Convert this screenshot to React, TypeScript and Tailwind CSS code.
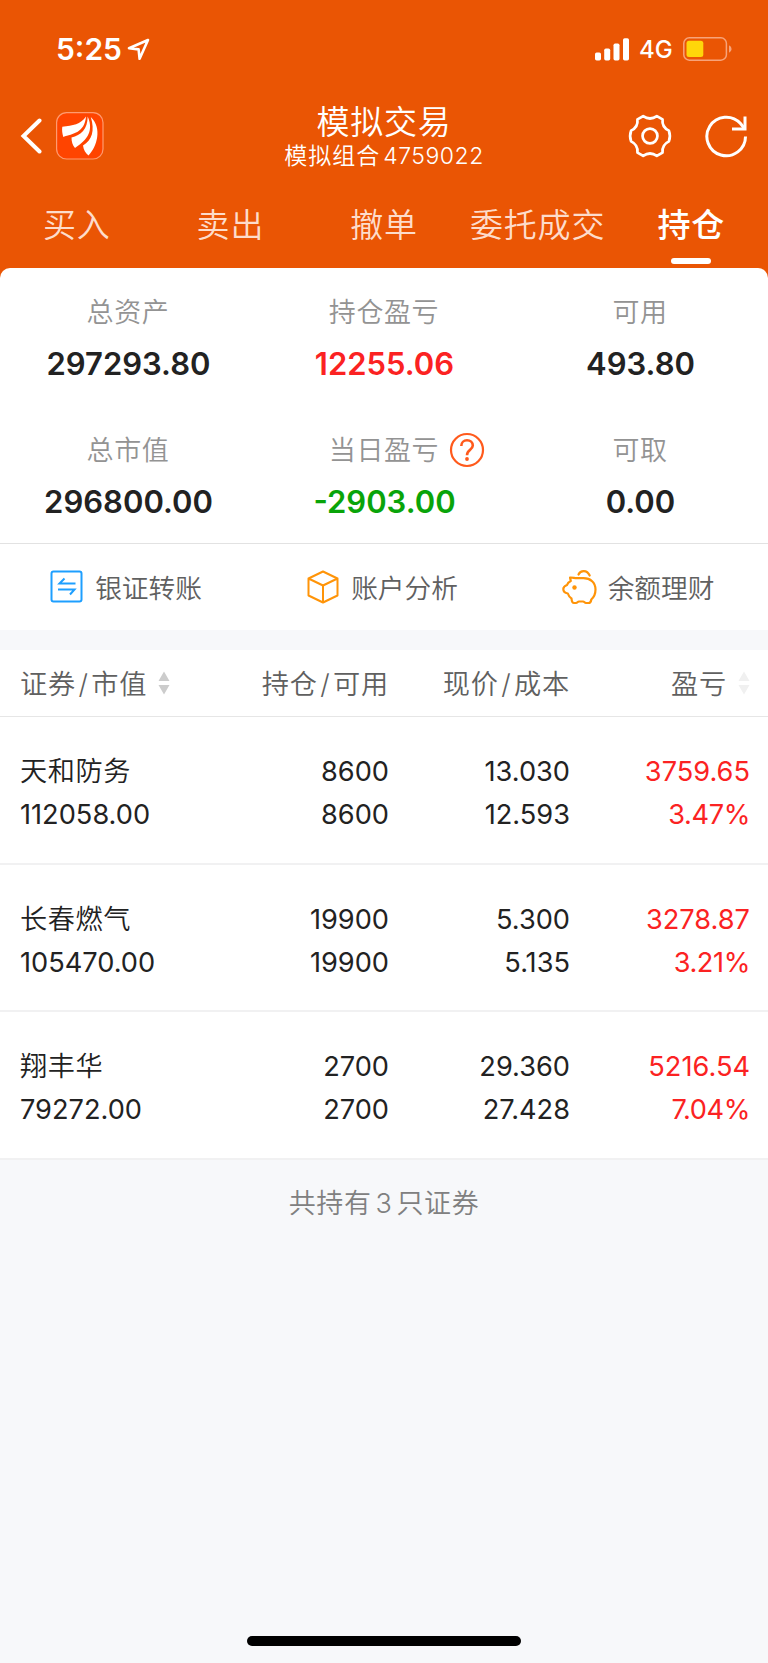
import type { ReactNode } from 'react';

type Tone = 'normal' | 'up' | 'down';

type Metric = {
  label: string;
  value: string;
  tone?: Tone;
  help?: boolean;
};

type Position = {
  name: string;
  marketValue: string;
  held: string;
  available: string;
  price: string;
  cost: string;
  profit: string;
  profitRate: string;
};

const tabs = ['买入', '卖出', '撤单', '委托成交', '持仓'];
const activeTab = '持仓';

const metrics: Metric[] = [
  { label: '总资产', value: '297293.80' },
  { label: '持仓盈亏', value: '12255.06', tone: 'up' },
  { label: '可用', value: '493.80' },
  { label: '总市值', value: '296800.00' },
  { label: '当日盈亏', value: '-2903.00', tone: 'down', help: true },
  { label: '可取', value: '0.00' },
];

const positions: Position[] = [
  {
    name: '天和防务',
    marketValue: '112058.00',
    held: '8600',
    available: '8600',
    price: '13.030',
    cost: '12.593',
    profit: '3759.65',
    profitRate: '3.47%',
  },
  {
    name: '长春燃气',
    marketValue: '105470.00',
    held: '19900',
    available: '19900',
    price: '5.300',
    cost: '5.135',
    profit: '3278.87',
    profitRate: '3.21%',
  },
  {
    name: '翔丰华',
    marketValue: '79272.00',
    held: '2700',
    available: '2700',
    price: '29.360',
    cost: '27.428',
    profit: '5216.54',
    profitRate: '7.04%',
  },
];

const toneClass: Record<Tone, string> = {
  normal: 'text-[#222]',
  up: 'text-[#fb2222]',
  down: 'text-[#09a409]',
};

function StatusBar() {
  return (
    <div className="flex h-[98px] items-center pl-[56px] pr-[36px] text-white">
      <span className="text-[30px] font-semibold leading-none">5:25</span>
      <svg className="ml-[5px]" width="23" height="23" viewBox="0 0 23 23" fill="none">
        <path
          d="M21 2 L2 10.2 L11.6 11.4 L12.6 20.8 Z"
          stroke="white"
          strokeWidth="2.6"
          strokeLinejoin="round"
        />
      </svg>
      <svg className="ml-auto" width="34" height="23" viewBox="0 0 34 23" fill="white">
        <rect x="0" y="14.5" width="6" height="8" rx="1.7" />
        <rect x="9.2" y="10.5" width="6" height="12" rx="1.7" />
        <rect x="18.5" y="5.5" width="6" height="17" rx="1.7" />
        <rect x="28" y="0.3" width="6" height="22.2" rx="1.7" />
      </svg>
      <span className="ml-[10px] w-[34px] pt-[2px] text-[24px] font-medium leading-none">4G</span>
      <svg className="ml-[10px]" width="49" height="24" viewBox="0 0 49 24" fill="none">
        <rect x="0.8" y="0.8" width="42.6" height="22.4" rx="5.5" stroke="#f7a37a" strokeWidth="1.5" />
        <rect x="3.5" y="3.8" width="16.8" height="16.2" rx="2.5" fill="#ffd60a" />
        <path d="M46 8.2 Q48.6 9.5 48.6 12 Q48.6 14.5 46 15.8 Z" fill="#f7a37a" />
      </svg>
    </div>
  );
}

function NavBar() {
  return (
    <div className="relative flex h-[92px] items-start justify-between pl-[20px] pr-[20px]">
      <div className="flex items-center pt-[14px]">
        <svg width="23" height="36" viewBox="0 0 23 36" fill="none">
          <path d="M19.5 2.5 L3.5 18 L19.5 33.5" stroke="white" strokeWidth="4" strokeLinecap="round" />
        </svg>
        <svg className="ml-[13px]" width="48" height="48" viewBox="0 0 48 48">
          <rect x="0.6" y="0.6" width="46.4" height="46.4" rx="10" fill="#ff4400" stroke="#ff9a70" strokeWidth="1.2" />
          <g fill="white">
            <path d="M30 4.5 C24.5 12.5 17 13.5 6.3 14.8 C5.8 18 6.2 21.5 7.3 25 C17 21.5 28.5 21 30 4.5 Z" />
            <path d="M31.7 4.5 C31.5 17.5 25 23 15.5 25.5 C15.5 29.5 16.5 33 19 36 C28 30 39 21 31.7 4.5 Z" />
            <path d="M34.8 5 C39 19 36 28 27 33.5 C27.5 38 29.5 41 32.5 43.5 C41 35 46.5 16 34.8 5 Z" />
          </g>
        </svg>
      </div>
      <div className="absolute inset-x-0 top-[3px] flex flex-col items-center text-white">
        <span className="text-[33px] font-[350] leading-[42px] tracking-[0.8px]">模拟交易</span>
        <span className="flex gap-[3px] text-[23px] leading-[26px]">
          <span className="font-[350] tracking-[1px]">模拟组合</span>
          <span className="font-[350] tracking-[0.5px]">4759022</span>
        </span>
      </div>
      <div className="flex items-center pt-[15px]">
        <svg width="46" height="46" viewBox="-0.5 -0.5 47 47" fill="none" stroke="white" strokeWidth="2.8">
          <path
            strokeLinejoin="round"
            d="M16 2.7 Q23 7.5 30 2.7 L35.8 6 Q35 14 42.3 17.5 Q44.3 23 42.3 28.5 Q35 32 35.8 40 L30 43.3 Q23 38.5 16 43.3 L10.2 40 Q11 32 3.7 28.5 Q1.7 23 3.7 17.5 Q11 14 10.2 6 Z"
          />
          <circle cx="23" cy="23" r="7.6" />
        </svg>
        <svg className="ml-[31px]" width="44" height="44" viewBox="0 0 44 44" fill="none" stroke="white" strokeWidth="3">
          <path d="M41.5 22.5 A19.3 19.3 0 1 1 36.5 9.5 L40.5 14.5" />
          <path d="M41 2.5 V15 H28" />
        </svg>
      </div>
    </div>
  );
}

function TabBar() {
  return (
    <div className="grid h-[78px] grid-cols-5">
      {tabs.map((tab) => (
        <div key={tab} className="relative flex justify-center pt-[11px]">
          <span
            className={
              tab === activeTab
                ? 'text-[33px] font-medium leading-[48px] tracking-[0.8px] text-white'
                : 'text-[33px] font-[350] leading-[48px] tracking-[0.8px] text-[#fddccb]'
            }
          >
            {tab}
          </span>
          {tab === activeTab ? (
            <span className="absolute bottom-[4px] left-1/2 h-[6px] w-[40px] -translate-x-1/2 rounded-full bg-white" />
          ) : null}
        </div>
      ))}
    </div>
  );
}

function HelpIcon() {
  return (
    <svg className="absolute -right-[46px] top-px" width="36" height="36" viewBox="0 0 36 36" fill="none">
      <circle cx="18" cy="18" r="16" stroke="#ff5a1c" strokeWidth="2.2" />
      <path
        d="M12.3 14 C12.3 10.5 14.8 8.3 18 8.3 C21.3 8.3 23.8 10.5 23.8 13.6 C23.8 17.8 18 18 18 23.2"
        stroke="#ff5a1c"
        strokeWidth="2.6"
      />
      <circle cx="18" cy="27" r="1.9" fill="#ff5a1c" />
    </svg>
  );
}

function Summary() {
  return (
    <div className="grid h-[276px] grid-cols-3 grid-rows-[138px_138px] border-b border-[#e2e2e2]">
      {metrics.map(({ label, value, tone = 'normal', help }) => (
        <div key={label} className="flex flex-col items-center pt-[25px]">
          <span className="relative text-[27px] font-[350] leading-[40px] tracking-[0.6px] text-[#939393]">
            {label}
            {help ? <HelpIcon /> : null}
          </span>
          <span className={`mt-[11px] pl-px text-[31px] font-semibold leading-[40px] ${toneClass[tone]}`}>
            {value}
          </span>
        </div>
      ))}
    </div>
  );
}

function Shortcut({ icon, label }: { icon: ReactNode; label: string }) {
  return (
    <div className="flex items-center justify-center pr-[4px]">
      {icon}
      <span className="ml-[11px] pt-px text-[26.7px] font-[350] leading-[40px] text-[#606060]">{label}</span>
    </div>
  );
}

function Shortcuts() {
  return (
    <div className="grid h-[86px] grid-cols-3">
      <Shortcut
        label="银证转账"
        icon={
          <svg width="34" height="34" viewBox="0 0 34 34" fill="none" stroke="#1e9fff" strokeWidth="2">
            <rect x="1.5" y="1.5" width="30" height="30" rx="2" />
            <path d="M25.5 13.5 H9.5 L14.5 8.5 M8 19.5 H24.5 L20 24.5" />
          </svg>
        }
      />
      <Shortcut
        label="账户分析"
        icon={
          <svg width="34" height="34" viewBox="0 0 34 34" fill="none" stroke="#ff9408" strokeWidth="2" strokeLinejoin="round">
            <path d="M17 1.5 L31.5 8.5 V25.5 L17 32.5 L2.5 25.5 V8.5 Z M2.5 8.5 L17 15.5 L31.5 8.5 M17 15.5 V32.5" />
          </svg>
        }
      />
      <Shortcut
        label="余额理财"
        icon={
          <svg width="35" height="36" viewBox="0 0 35 36" fill="none" stroke="#ff9408" strokeWidth="2.2" strokeLinejoin="round" strokeLinecap="round">
            <path d="M8 8.5 C10.5 8.3 12.5 9.2 14.5 9.2 H21.5 C28.500 9.2 33.5 13.5 33.5 20.5 C33.5 25.5 31.500 28.5 29.3 30.5 C29 33 28 34 26.500 34 H24 C22.500 34 22.500 32.5 21 32.5 H17 C15.500 32.5 15.500 34 14 34 H12 C10 34 9.700 32 9.500 29.5 C7.500 28.5 6.500 26.5 5.8 24.5 C3 24 1.3 22.5 1.3 20 C1.3 17.5 3 16.8 5 16 C5.500 14 7 12.8 8.8 12 Z" />
            <path d="M16.5 5.5 C18.500 1 25 0.5 27.700 6.5" />
            <circle cx="12.5" cy="18.5" r="2.2" fill="#ff9408" stroke="none" />
          </svg>
        }
      />
    </div>
  );
}

function SortArrows({ className }: { className: string }) {
  return (
    <svg className={className} width="12" height="24" viewBox="0 0 12 24" fill="currentColor">
      <path d="M6 0.5 L11.5 10 H0.5 Z M0.5 14 H11.5 L6 23.5 Z" />
    </svg>
  );
}

function Slash() {
  return <span className="px-[2.5px]">/</span>;
}

function TableHead() {
  return (
    <div className="grid h-[67px] grid-cols-[209px_180px_181px_180px] items-center border-b border-[#e6e6e6] pt-[3px] text-[27.2px] font-[350] leading-[40px] tracking-[0.8px] text-[#606060]">
      <div className="flex items-center pl-[20px]">
        证券<Slash />市值
        <SortArrows className="-mt-[3px] ml-[11px] text-[#ccc]" />
      </div>
      <div className="text-right">
        持仓<Slash />可用
      </div>
      <div className="text-right">
        现价<Slash />成本
      </div>
      <div className="flex items-center justify-end">
        盈亏
        <SortArrows className="-mt-[3px] ml-[11px] text-[#f0f0f0]" />
      </div>
    </div>
  );
}

function Cell({ top, bottom }: { top: string; bottom: string }) {
  return (
    <div className="flex flex-col text-right">
      <span>{top}</span>
      <span>{bottom}</span>
    </div>
  );
}

function PositionRow({ position }: { position: Position }) {
  return (
    <div className="grid h-[147.5px] grid-cols-[209px_180px_181px_180px] border-b-2 border-[#f1f1f2] pt-[33px] text-[27.2px] leading-[43.3px] text-[#222]">
      <div className="flex flex-col pl-[20px]">
        <span className="font-[350] tracking-[0.6px]">{position.name}</span>
        <span>{position.marketValue}</span>
      </div>
      <Cell top={position.held} bottom={position.available} />
      <Cell top={position.price} bottom={position.cost} />
      <div className="flex flex-col text-right text-[#fb2222]">
        <span>{position.profit}</span>
        <span className="tracking-[-0.4px]">{position.profitRate}</span>
      </div>
    </div>
  );
}

export default function App() {
  return (
    <div className="flex h-[1663px] w-[768px] flex-col overflow-hidden bg-[#f7f8fa] font-[Inter,'Noto_Sans_CJK_SC',sans-serif]">
      <div className="bg-[#ea5504]">
        <StatusBar />
        <NavBar />
        <TabBar />
        <div className="rounded-t-[10px] bg-white">
          <Summary />
          <Shortcuts />
        </div>
      </div>
      <div className="mt-[20px] bg-white">
        <TableHead />
        {positions.map((position) => (
          <PositionRow key={position.name} position={position} />
        ))}
      </div>
      <p className="mt-[24px] text-center text-[27px] font-[350] leading-[40px] tracking-[0.6px] text-[#808080]">
        共持有<span className="px-[4px]">3</span>只证券
      </p>
      <div className="mx-auto mb-[17px] mt-auto h-[10px] w-[274px] rounded-full bg-black" />
    </div>
  );
}
